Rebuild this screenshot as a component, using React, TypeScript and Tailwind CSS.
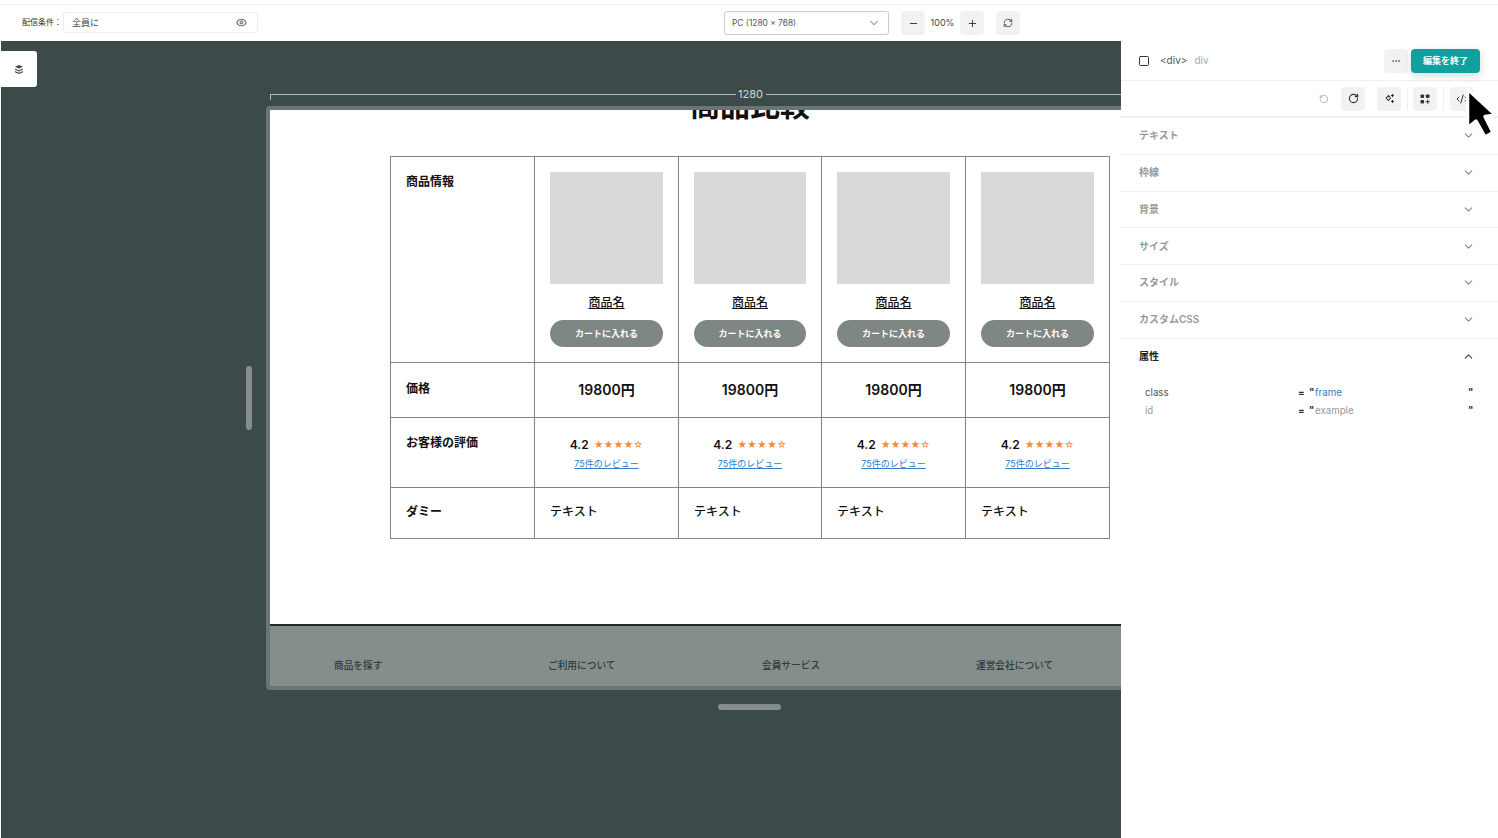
import { ChevronDown, ChevronUp, Eye, Minus, Plus, RefreshCw, Ellipsis, RotateCw, RotateCcw, CodeXml, Square } from 'lucide-react';

const fontFamily = "font-['Inter','Noto_Sans_CJK_JP',sans-serif]";
const products = [0, 1, 2, 3];
const sections = ['テキスト', '枠線', '背景', 'サイズ', 'スタイル', 'カスタムCSS'];

const labelCell = 'border border-[#7f8785] align-top pl-[15px] text-[12px] font-semibold text-[#111]';
const bodyCell = 'border border-[#7f8785] align-top';

function TopBar() {
    return (
        <div className="h-[41px] shrink-0 bg-white">
            <div className="mt-[4px] h-px bg-[#eeeeee]" />
            <div className="flex h-[36px] items-center pl-[21px]">
                <span className="mb-[2px] w-[41px] text-[8px] text-[#333]">配信条件：</span>
                <div className="mb-px flex h-[21px] w-[195px] items-center justify-between rounded-[3px] border border-[#eeeeee] pl-[8px] pr-[10px]">
                    <span className="text-[9px] text-[#444]">全員に</span>
                    <Eye size={11} strokeWidth={2.5} className="text-[#777]" />
                </div>
                <div className="ml-[466px] flex h-[24px] w-[165px] items-center justify-between rounded-[3px] border border-[#cccccc] pl-[7px] pr-[7px]">
                    <span className="text-[8.4px] text-[#555]">PC (1280 × 768)</span>
                    <ChevronDown size={14} className="text-[#aaa]" />
                </div>
                <button className="ml-[12px] flex h-[24px] w-[24px] items-center justify-center rounded-[4px] bg-[#f2f2f2]">
                    <Minus size={11} className="text-[#333]" />
                </button>
                <span className="w-[35px] text-center text-[9px] text-[#444]">100%</span>
                <button className="flex h-[24px] w-[24px] items-center justify-center rounded-[4px] bg-[#f2f2f2]">
                    <Plus size={11} className="text-[#333]" />
                </button>
                <button className="ml-[12px] flex h-[24px] w-[24px] items-center justify-center rounded-[4px] bg-[#f2f2f2]">
                    <RefreshCw size={10} strokeWidth={2.5} className="text-[#666]" />
                </button>
            </div>
        </div>
    );
}

function CompareTable() {
    return (
        <table className="w-[719px] table-fixed border-collapse">
            <colgroup>
                <col className="w-[144px]" />
                <col className="w-[144px]" />
                <col className="w-[143px]" />
                <col className="w-[144px]" />
                <col className="w-[144px]" />
            </colgroup>
            <tbody>
                <tr className="h-[206px]">
                    <td className={`${labelCell} pt-[16px]`}>商品情報</td>
                    {products.map((p) => (
                        <td key={p} className={`${bodyCell} px-[15px] pt-[15px]`}>
                            <div className="h-[112px] bg-[#d9d9d9]" />
                            <div className="mt-[10px] text-center text-[12px] font-medium leading-[18px] text-[#111] underline">商品名</div>
                            <button className="mt-[8px] flex h-[27px] w-full items-center justify-center rounded-full bg-[#7f8785] text-[9px] font-semibold text-white">
                                カートに入れる
                            </button>
                        </td>
                    ))}
                </tr>
                <tr className="h-[55px]">
                    <td className={`${labelCell} pt-[17px]`}>価格</td>
                    {products.map((p) => (
                        <td key={p} className={`${bodyCell} pt-[16px] text-center text-[14px] font-semibold leading-[22px] text-[#111]`}>
                            19800円
                        </td>
                    ))}
                </tr>
                <tr className="h-[70px]">
                    <td className={`${labelCell} pt-[16px]`}>お客様の評価</td>
                    {products.map((p) => (
                        <td key={p} className={`${bodyCell} pt-[18px] text-center`}>
                            <div className="flex items-center justify-center gap-[5px] leading-[18px]">
                                <span className="text-[12px] font-semibold text-[#111]">4.2</span>
                                <span className="text-[9.5px] leading-none text-[#ef8b3c]">★★★★☆</span>
                            </div>
                            <a className="mt-[4px] block text-[9px] leading-[12px] text-[#2f80c8] underline">75件のレビュー</a>
                        </td>
                    ))}
                </tr>
                <tr className="h-[51px]">
                    <td className={`${labelCell} pt-[15px]`}>ダミー</td>
                    {products.map((p) => (
                        <td key={p} className={`${bodyCell} pl-[15px] pt-[15px] text-[12px] font-medium text-[#111]`}>
                            テキスト
                        </td>
                    ))}
                </tr>
            </tbody>
        </table>
    );
}

function Canvas() {
    return (
        <div className="relative flex-1 overflow-hidden bg-[#3c4a49] pl-[269px] pt-[53px]">
            <div className="flex h-[12px] w-[960px] items-start">
                <div className="h-[6px] flex-1 border-l border-t border-[#b6bcba]" />
                <span className="mt-[-6px] w-[30px] text-center text-[11px] leading-[12px] text-[#d5d9d8]">1280</span>
                <div className="h-[6px] flex-1 border-t border-[#b6bcba]" />
            </div>
            <div className="ml-[-4px] w-[968px] overflow-hidden rounded-[4px] border-[4px] border-[#6a7674]">
                <div className="h-[514px] overflow-hidden bg-white">
                    <h1 className="mt-[-20px] text-center text-[30px] font-bold leading-[30px] text-[#111]">商品比較</h1>
                    <div className="ml-[120px] mt-[36px]">
                        <CompareTable />
                    </div>
                </div>
                <div className="h-[2px] bg-[#1f2b2a]" />
                <div className="grid h-[60px] grid-cols-[214px_214px_214px_214px] bg-[#868e8b] pl-[64px] pt-[34px] text-[9.7px] font-medium leading-[12px] text-[#333b3a]">
                    <span>商品を探す</span>
                    <span>ご利用について</span>
                    <span>会員サービス</span>
                    <span>運営会社について</span>
                </div>
            </div>

            {/* layers tab */}
            <div className="absolute left-0 top-[10px] flex h-[36px] w-[36px] items-center justify-center rounded-r-[3px] bg-white">
                <svg width="8" height="9" viewBox="0 0 8 9" fill="#3a4645">
                    <path d="M4 0 L8 1.8 L4 3.6 L0 1.8 Z" />
                    <path d="M0 3.4 L4 5.2 L8 3.4 L8 4.6 L4 6.4 L0 4.6 Z" />
                    <path d="M0 6 L4 7.8 L8 6 L8 7.2 L4 9 L0 7.2 Z" />
                </svg>
            </div>
            {/* resize handles */}
            <div className="absolute left-[245px] top-[325px] h-[64px] w-[6px] rounded-full bg-[#868e8b]" />
            <div className="absolute left-[717px] top-[663px] h-[6px] w-[63px] rounded-full bg-[#868e8b]" />
        </div>
    );
}

function ToolButton({ children }: { children: React.ReactNode }) {
    return <button className="flex h-[24px] w-[24px] items-center justify-center rounded-[4px] bg-[#f2f2f2] text-[#333]">{children}</button>;
}

function SidePanel() {
    return (
        <div className="w-[377px] shrink-0 bg-white">
            <div className="flex h-[40px] items-center border-b border-[#f0f0f0] pl-[17px] pr-[18px]">
                <Square size={12} strokeWidth={1.8} className="text-[#222]" />
                <span className="ml-[10px] text-[10px] text-[#555]">&lt;div&gt;</span>
                <span className="ml-[7px] text-[10px] text-[#aaa]">div</span>
                <button className="ml-auto mr-[3px] flex h-[24px] w-[24px] items-center justify-center rounded-[4px] bg-[#f2f2f2] text-[#555]">
                    <Ellipsis size={10} />
                </button>
                <button className="h-[24px] w-[69px] rounded-[4px] bg-[#12a09f] text-[9px] font-semibold text-white shadow-[0_3px_8px_rgba(0,0,0,0.15)]">
                    編集を終了
                </button>
            </div>
            <div className="flex h-[37px] items-center border-b-2 border-[#f0f0f0] pl-[198px]">
                <RotateCcw size={10} className="text-[#aaa]" />
                <div className="ml-[12px]">
                    <ToolButton><RotateCw size={11} strokeWidth={2.5} /></ToolButton>
                </div>
                <div className="ml-[12px]">
                    <ToolButton>
                        <svg width="11" height="11" viewBox="0 0 11 11" fill="none" stroke="currentColor" strokeWidth="1.1">
                            <path d="M4.5 2.5 L6.5 5 L4.5 7.5 L2.2 5 Z" />
                            <path d="M8.5 1 V4 M7 2.5 H10 M8.5 7 V10 M7 8.5 H10" />
                        </svg>
                    </ToolButton>
                </div>
                <div className="ml-[6px] mr-[5px] h-[24px] w-px bg-[#f0f0f0]" />
                <ToolButton>
                    <svg width="10" height="10" viewBox="0 0 10 10" fill="currentColor">
                        <rect x="0.5" y="0.5" width="3.6" height="3.6" rx="0.8" />
                        <rect x="5.9" y="0.5" width="3.6" height="3.6" rx="0.8" />
                        <rect x="0.5" y="5.9" width="3.6" height="3.6" rx="0.8" />
                        <path d="M7.2 5.6 H8.2 V7.2 H9.8 V8.2 H8.2 V9.8 H7.2 V8.2 H5.6 V7.2 H7.2 Z" />
                    </svg>
                </ToolButton>
                <div className="ml-[6px] mr-[6px] h-[24px] w-px bg-[#f0f0f0]" />
                <ToolButton><CodeXml size={12} /></ToolButton>
            </div>
            {sections.map((s) => (
                <div key={s} className="flex h-[36.75px] items-center justify-between border-b border-[#f0f0f0] pl-[18px] pr-[23px]">
                    <span className="text-[10px] font-semibold text-[#999]">{s}</span>
                    <ChevronDown size={13} className="text-[#888]" />
                </div>
            ))}
            <div className="flex h-[36px] items-center justify-between pl-[18px] pr-[23px]">
                <span className="text-[10px] font-bold text-[#222]">属性</span>
                <ChevronUp size={13} className="text-[#444]" />
            </div>
            <div className="pl-[24px] pt-[9px] text-[9.7px] leading-[18px]">
                {[
                    { name: 'class', nameColor: 'text-[#555]', value: 'frame', valueColor: 'text-[#2f80c8]' },
                    { name: 'id', nameColor: 'text-[#999]', value: 'example', valueColor: 'text-[#999]' },
                ].map((a) => (
                    <div key={a.name} className="flex">
                        <span className={`w-[153px] ${a.nameColor}`}>{a.name}</span>
                        <span className="w-[11px] font-bold text-[#333]">=</span>
                        <span className="w-[6px] font-bold text-[#333]">"</span>
                        <span className={`w-[153px] ${a.valueColor}`}>{a.value}</span>
                        <span className="font-bold text-[#333]">"</span>
                    </div>
                ))}
            </div>
        </div>
    );
}

export default function App() {
    return (
        <div className={`relative flex h-[838px] w-[1498px] flex-col overflow-hidden bg-white pl-px ${fontFamily}`}>
            <TopBar />
            <div className="flex min-h-0 flex-1">
                <Canvas />
                <SidePanel />
            </div>
            {/* mouse pointer */}
            <svg className="absolute left-[1460px] top-[82px]" width="38" height="60" viewBox="0 0 38 60">
                <path d="M7.5 7 L7.5 46 L16 39 L25 55 L33 50.5 L25 34.5 L35.5 33 Z" fill="#000" stroke="#fff" strokeWidth="3.5" strokeLinejoin="round" />
            </svg>
        </div>
    );
}
